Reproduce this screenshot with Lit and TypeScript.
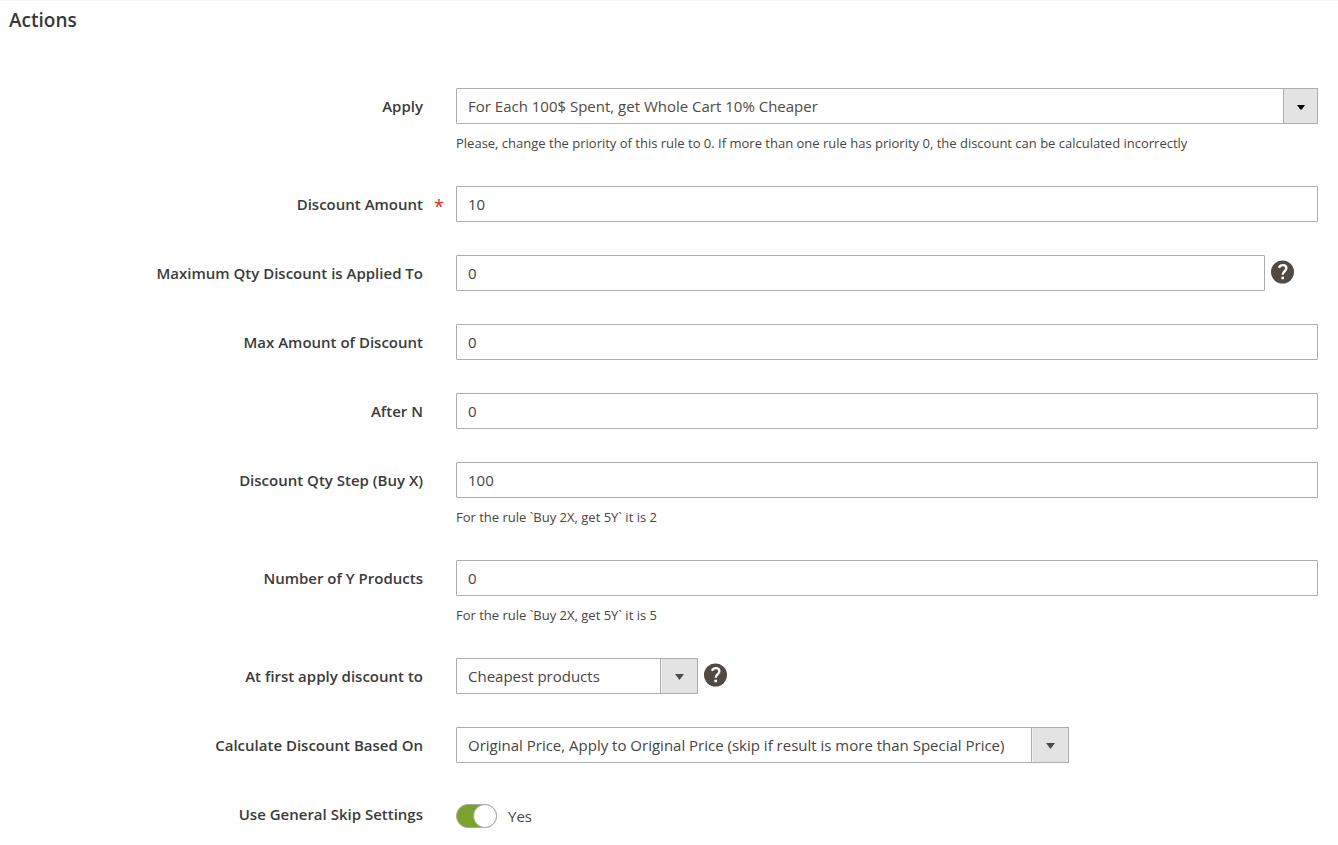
import { LitElement, html, css, svg, nothing } from "lit";
import { customElement } from "lit/decorators.js";

interface Field {
  id: string;
  label: string;
  value: string;
  kind?: "text" | "select" | "toggle";
  size?: "full" | "long" | "short";
  required?: boolean;
  help?: boolean;
  note?: string;
}

const FIELDS: Field[] = [
  { id: "apply", label: "Apply", value: "For Each 100$ Spent, get Whole Cart 10% Cheaper", kind: "select", size: "full",
    note: "Please, change the priority of this rule to 0. If more than one rule has priority 0, the discount can be calculated incorrectly" },
  { id: "amount", label: "Discount Amount", value: "10", required: true },
  { id: "max-qty", label: "Maximum Qty Discount is Applied To", value: "0", help: true },
  { id: "max-amount", label: "Max Amount of Discount", value: "0" },
  { id: "after-n", label: "After N", value: "0" },
  { id: "step", label: "Discount Qty Step (Buy X)", value: "100", note: "For the rule `Buy 2X, get 5Y` it is 2" },
  { id: "y-products", label: "Number of Y Products", value: "0", note: "For the rule `Buy 2X, get 5Y` it is 5" },
  { id: "order", label: "At first apply discount to", value: "Cheapest products", kind: "select", size: "short", help: true },
  { id: "based-on", label: "Calculate Discount Based On", value: "Original Price, Apply to Original Price (skip if result is more than Special Price)", kind: "select", size: "long" },
  { id: "skip", label: "Use General Skip Settings", value: "Yes", kind: "toggle" },
];

@customElement("app-root")
export class AppRoot extends LitElement {
  static styles = css`
    :host {
      display: block;
      border-top: 1px solid #f5f5f5;
      background: #fff;
      color: #484542;
      font: 15px/20px "Open Sans", "Noto Sans", sans-serif;
    }
    * { box-sizing: border-box; }
    .title {
      margin: 0;
      padding: 7px 9px 56px;
      color: #383838;
      font-size: 19px;
      font-weight: 600;
      line-height: 24px;
    }
    .form { display: grid; gap: 33px; padding-right: 20px; }
    .row {
      display: grid;
      grid-template-columns: 423px minmax(0, 1fr);
      column-gap: 33px;
    }
    .label {
      position: relative;
      justify-self: end;
      align-self: start;
      padding-top: 8px;
      color: #3b3b3b;
      font-weight: 600;
    }
    .required::after {
      content: "*";
      position: absolute;
      left: 100%;
      top: 10px;
      margin-left: 11px;
      color: #e22626;
      font-size: 18px;
      font-weight: 400;
    }
    .control { display: flex; gap: 6px; }
    .input, .select {
      height: 36px;
      margin: 0;
      border: 1px solid #adadad;
      border-radius: 1px;
      background: #fff;
      color: inherit;
      font: inherit;
    }
    .input { flex: 1; min-width: 0; padding: 0 11px; }
    .picker { position: relative; display: flex; }
    .full { flex: 1; color: #514943; }
    .short { width: 242px; }
    .long { width: 613px; max-width: 100%; }
    .select { width: 100%; appearance: none; padding: 0 49px 0 11px; }
    .arrow {
      position: absolute;
      inset: 0 0 0 auto;
      width: 38px;
      height: 36px;
      pointer-events: none;
    }
    .full .arrow { width: 35px; }
    .help {
      display: flex;
      align-self: flex-start;
      margin: 5px 0 0;
      padding: 0;
      border: 0;
      background: none;
    }
    .trailing { margin-right: 23px; }
    .note {
      margin: 10px 0 0;
      font-size: 13px;
      line-height: 19px;
    }
    .toggle { align-items: center; gap: 11px; padding-top: 8px; }
    .switch {
      appearance: none;
      display: flex;
      width: 41px;
      height: 24px;
      margin: 0;
      border: 1px solid #aaa6a0;
      border-radius: 12px;
      background: #e3e3e3;
    }
    .switch::before {
      content: "";
      width: 24px;
      height: 24px;
      margin: -1px;
      border: 1px solid #aaa6a0;
      border-radius: 50%;
      background: #fff;
      box-sizing: border-box;
    }
    .switch:checked { justify-content: flex-end; background: #79a22e; }
  `;

  private help(f: Field) {
    return html`<button class="help ${f.kind ? "" : "trailing"}" type="button" aria-label="Help: ${f.label}">
      <svg width="24" height="24" viewBox="0 0 24 24" aria-hidden="true">
        <circle cx="11.5" cy="12" r="11.5" fill="#514943" />
        <path d="M7.9 7.7C8.8 5.9 10.1 5.2 11.8 5.2C14.1 5.2 15.4 6.5 15.4 8.3C15.4 11 11.7 11.2 11.7 14.7" fill="none" stroke="#fff" stroke-width="2.3" />
        <path d="M10.4 16.7H13V19.2H10.4Z" fill="#fff" />
      </svg>
    </button>`;
  }

  private arrow(full: boolean) {
    const width = full ? 35 : 38;
    return html`<svg class="arrow" viewBox="0 0 ${width} 36" aria-hidden="true">
      <path d="M${full ? 0 : 1.5} 0H${width}V36H${full ? 0 : 1.5}Z" fill="#e3e3e3" />
      <path d="M.5 0V36M0 .5H${width}M0 35.5H${width}M${width - 0.5} 0V36" stroke="#adadad" fill="none" />
      ${full
        ? svg`<path d="M14 17H22L18.8 21.5H17.2Z" fill="#000" />`
        : svg`<path d="M15 16H24L19.5 22Z" fill="#514943" />`}
    </svg>`;
  }

  private control(f: Field) {
    if (f.kind === "toggle") {
      return html`<div class="control toggle">
        <input class="switch" type="checkbox" role="switch" id=${f.id} checked /><span>${f.value}</span>
      </div>`;
    }
    return html`<div class="control">
      ${f.kind === "select"
        ? html`<div class="picker ${f.size}">
            <select class="select" id=${f.id}><option>${f.value}</option></select>
            ${this.arrow(f.size === "full")}
          </div>`
        : html`<input class="input" type="text" id=${f.id} .value=${f.value} ?required=${f.required} />`}
      ${f.help ? this.help(f) : nothing}
    </div>`;
  }

  render() {
    return html`<main>
      <h1 class="title">Actions</h1>
      <form class="form">
        ${FIELDS.map((f) => html`<div class="row">
          <label class="label ${f.required ? "required" : ""}" for=${f.id}>${f.label}</label>
          <div>
            ${this.control(f)}
            ${f.note ? html`<p class="note">${f.note}</p>` : nothing}
          </div>
        </div>`)}
      </form>
    </main>`;
  }
}
